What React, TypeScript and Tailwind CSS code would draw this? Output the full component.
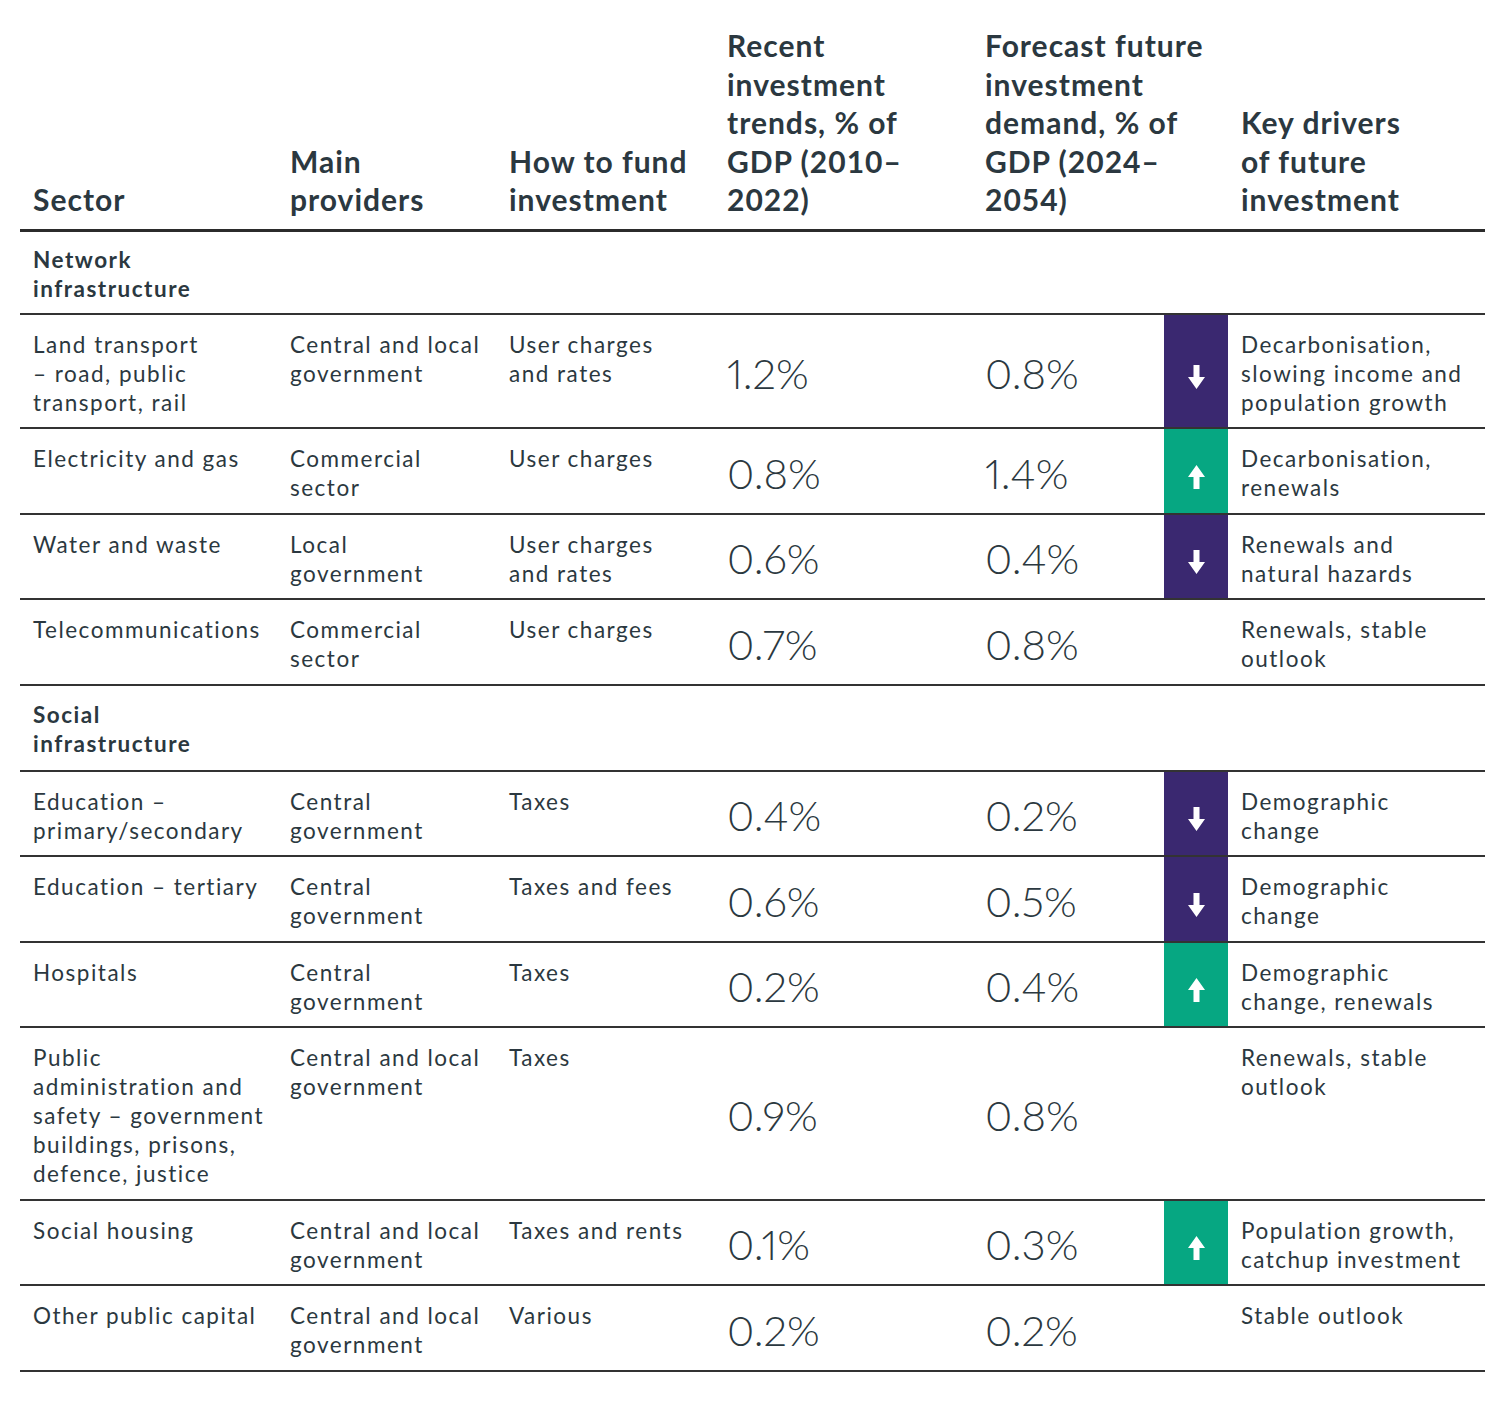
import React from "react";

type Trend = "up" | "down" | null;
type Row =
  | { kind: "section"; label: string[]; tall?: boolean }
  | {
      kind: "row";
      sector: string[];
      providers: string[];
      fund: string[];
      recent: string;
      forecast: string;
      trend: Trend;
      drivers: string[];
    };

const rows: Row[] = [
  { kind: "section", label: ["Network", "infrastructure"] },
  {
    kind: "row",
    sector: ["Land transport", "– road, public", "transport, rail"],
    providers: ["Central and local", "government"],
    fund: ["User charges", "and rates"],
    recent: "1.2%",
    forecast: "0.8%",
    trend: "down",
    drivers: ["Decarbonisation,", "slowing income and", "population growth"],
  },
  {
    kind: "row",
    sector: ["Electricity and gas"],
    providers: ["Commercial", "sector"],
    fund: ["User charges"],
    recent: "0.8%",
    forecast: "1.4%",
    trend: "up",
    drivers: ["Decarbonisation,", "renewals"],
  },
  {
    kind: "row",
    sector: ["Water and waste"],
    providers: ["Local", "government"],
    fund: ["User charges", "and rates"],
    recent: "0.6%",
    forecast: "0.4%",
    trend: "down",
    drivers: ["Renewals and", "natural hazards"],
  },
  {
    kind: "row",
    sector: ["Telecommunications"],
    providers: ["Commercial", "sector"],
    fund: ["User charges"],
    recent: "0.7%",
    forecast: "0.8%",
    trend: null,
    drivers: ["Renewals, stable", "outlook"],
  },
  { kind: "section", label: ["Social", "infrastructure"], tall: true },
  {
    kind: "row",
    sector: ["Education –", "primary/secondary"],
    providers: ["Central", "government"],
    fund: ["Taxes"],
    recent: "0.4%",
    forecast: "0.2%",
    trend: "down",
    drivers: ["Demographic", "change"],
  },
  {
    kind: "row",
    sector: ["Education – tertiary"],
    providers: ["Central", "government"],
    fund: ["Taxes and fees"],
    recent: "0.6%",
    forecast: "0.5%",
    trend: "down",
    drivers: ["Demographic", "change"],
  },
  {
    kind: "row",
    sector: ["Hospitals"],
    providers: ["Central", "government"],
    fund: ["Taxes"],
    recent: "0.2%",
    forecast: "0.4%",
    trend: "up",
    drivers: ["Demographic", "change, renewals"],
  },
  {
    kind: "row",
    sector: [
      "Public",
      "administration and",
      "safety – government",
      "buildings, prisons,",
      "defence, justice",
    ],
    providers: ["Central and local", "government"],
    fund: ["Taxes"],
    recent: "0.9%",
    forecast: "0.8%",
    trend: null,
    drivers: ["Renewals, stable", "outlook"],
  },
  {
    kind: "row",
    sector: ["Social housing"],
    providers: ["Central and local", "government"],
    fund: ["Taxes and rents"],
    recent: "0.1%",
    forecast: "0.3%",
    trend: "up",
    drivers: ["Population growth,", "catchup investment"],
  },
  {
    kind: "row",
    sector: ["Other public capital"],
    providers: ["Central and local", "government"],
    fund: ["Various"],
    recent: "0.2%",
    forecast: "0.2%",
    trend: null,
    drivers: ["Stable outlook"],
  },
];

function Lines({ lines }: { lines: string[] }) {
  return (
    <>
      {lines.map((l, i) => (
        <span key={i} className="block whitespace-nowrap">
          {l}
        </span>
      ))}
    </>
  );
}

function Arrow({ dir }: { dir: "up" | "down" }) {
  return (
    <svg width="17" height="24" viewBox="0 0 17 24" className="mx-auto block">
      {dir === "down" ? (
        <path d="M5.5 0H11.5V12H17L8.5 24L0 12H5.5Z" fill="#ffffff" />
      ) : (
        <path d="M5.5 24H11.5V12H17L8.5 0L0 12H5.5Z" fill="#ffffff" />
      )}
    </svg>
  );
}

const headerCell =
  "align-bottom text-left font-bold text-[30px] leading-[38.5px] tracking-[1px] px-[13px] pt-[6px] pb-[10px] border-b-[3px] border-[#2b2b2b]";
const textCell =
  "align-top px-[13px] pt-[15px] pb-[10.5px] border-b-2 border-[#333333] text-[22.5px] leading-[29px] tracking-[1.5px]";
const sectionCell =
  "align-top px-[13px] pt-[13px] pb-[10px] border-b-2 border-[#333333] text-[22.5px] leading-[29px] tracking-[1.5px]";
const sectionCellTall =
  "align-top px-[13px] pt-[14px] pb-[12px] border-b-2 border-[#333333] text-[22.5px] leading-[29px] tracking-[1.5px]";
const numCell =
  "align-middle px-[13px] pt-[4px] border-b-2 border-[#333333] text-[42px] leading-[42px] font-light proportional-nums";

export default function App() {
  return (
    <div
      className="min-h-screen w-full bg-white pt-[20px] pl-[20px] pb-[30px] text-[#2b3840]"
      style={{ fontFamily: "Lato, 'Open Sans', sans-serif" }}
    >
      <table className="table-fixed border-collapse w-[1465px]">
        <colgroup>
          <col className="w-[257px]" />
          <col className="w-[219px]" />
          <col className="w-[218px]" />
          <col className="w-[258px]" />
          <col className="w-[192px]" />
          <col className="w-[64px]" />
          <col className="w-[257px]" />
        </colgroup>
        <thead>
          <tr>
            <th className={headerCell}>
              <Lines lines={["Sector"]} />
            </th>
            <th className={headerCell}>
              <Lines lines={["Main", "providers"]} />
            </th>
            <th className={headerCell}>
              <Lines lines={["How to fund", "investment"]} />
            </th>
            <th className={headerCell}>
              <Lines
                lines={["Recent", "investment", "trends, % of", "GDP (2010–", "2022)"]}
              />
            </th>
            <th className={headerCell} colSpan={2}>
              <Lines
                lines={[
                  "Forecast future",
                  "investment",
                  "demand, % of",
                  "GDP (2024–",
                  "2054)",
                ]}
              />
            </th>
            <th className={headerCell}>
              <Lines lines={["Key drivers", "of future", "investment"]} />
            </th>
          </tr>
        </thead>
        <tbody>
          {rows.map((r, i) => {
            if (r.kind === "section") {
              const c = r.tall ? sectionCellTall : sectionCell;
              return (
                <tr key={i}>
                  <td className={c + " font-bold"}>
                    <Lines lines={r.label} />
                  </td>
                  <td className={c} />
                  <td className={c} />
                  <td className={c} />
                  <td className={c} />
                  <td className={c} />
                  <td className={c} />
                </tr>
              );
            }
            return (
              <tr key={i}>
                <td className={textCell}>
                  <Lines lines={r.sector} />
                </td>
                <td className={textCell}>
                  <Lines lines={r.providers} />
                </td>
                <td className={textCell}>
                  <Lines lines={r.fund} />
                </td>
                <td className={numCell}>{r.recent}</td>
                <td className={numCell}>{r.forecast}</td>
                <td
                  className={
                    "align-middle pt-[12px] border-b-2 border-[#333333] " +
                    (r.trend === "down"
                      ? "bg-[#3a2870]"
                      : r.trend === "up"
                      ? "bg-[#06a782]"
                      : "")
                  }
                >
                  {r.trend && <Arrow dir={r.trend} />}
                </td>
                <td className={textCell}>
                  <Lines lines={r.drivers} />
                </td>
              </tr>
            );
          })}
        </tbody>
      </table>
    </div>
  );
}
